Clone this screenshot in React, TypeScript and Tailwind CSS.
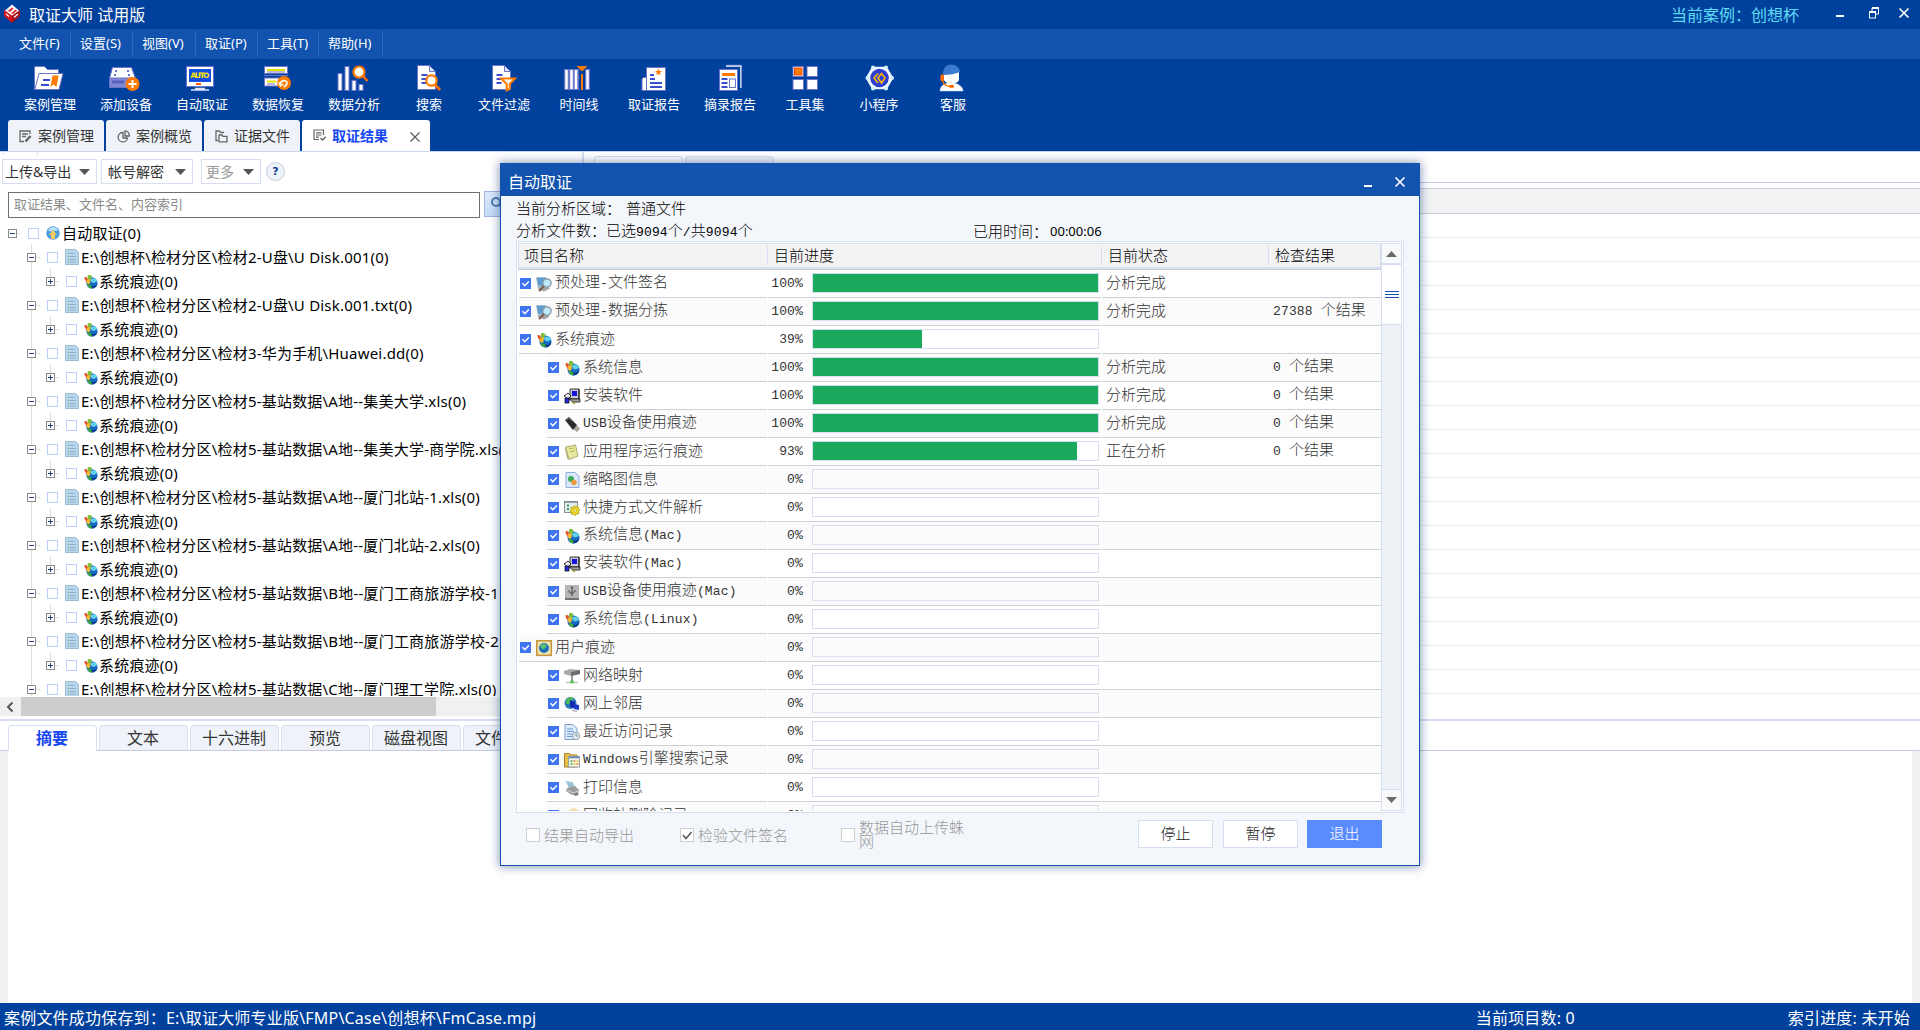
import React from "react";

const P = "#6a74c8";

function Svg({ w, h, vb, className, children }: { w: number; h: number; vb?: string; className?: string; children: React.ReactNode }) {
  return (
    <svg width={w} height={h} viewBox={vb ?? `0 0 ${w} ${h}`} className={"block shrink-0 overflow-visible " + (className ?? "")} fill="none">
      {children}
    </svg>
  );
}

/* ---------- toolbar icons ---------- */

const DocPage = ({ x }: { x: number }) => (
  <>
    <path d={`M${x} 1.5h12l6 6v18h-18z`} fill="#fff" stroke={P} />
    <path d={`M${x + 12} 1.5v6h6z`} fill="#dfe3ff" stroke={P} />
    <path d={`M${x + 4} 11h6M${x + 4} 15h5M${x + 4} 19h5`} stroke="#3a4fd0" strokeWidth="2" />
  </>
);

const toolIcons: Record<string, React.ReactNode> = {
  cases: (
    <>
      <path d="M.5 25.5V2.5h10l3 3h11v5" fill="#fff" stroke={P} />
      <path d="M5 9.5h24l-4 16H.8z" fill="#fff" stroke={P} />
      <path d="M9 16h7M7 21h8" stroke="#3a4fd0" strokeWidth="2" />
      <path d="M18.5 11.5h6l-2 11.5-3-2.5-3 2.5z" fill="#ff7a00" />
    </>
  ),
  device: (
    <>
      <path d="M2.5 3.500h19l4 11h-26z" fill="#fff" stroke={P} />
      <rect x="-.5" y="14" width="26" height="9.500" fill="#8188d4" stroke={P} />
      <path d="M2 18h12" stroke="#5660bf" strokeWidth="3" />
      <path d="M5 7h2M17 7h2M4 11h2M18 11h2" stroke={P} strokeWidth="2" />
      <circle cx="22.500" cy="20" r="7" fill="#ff7a00" />
      <path d="M22.500 16v8M18.500 20h8" stroke="#fff" strokeWidth="2" />
    </>
  ),
  auto: (
    <>
      <rect x=".5" y="2.500" width="27" height="20" fill="#fff" stroke={P} />
      <rect x="3" y="5" width="22" height="13" fill="#1450e0" />
      <text x="14" y="14" textAnchor="middle" fontSize="7.500" textLength="19" fontFamily="DejaVu Sans" fontWeight="700" fill="#ffe600">AUTO</text>
      <path d="M10 20h5" stroke="#ff5a00" strokeWidth="2" />
      <path d="M9 24.500h10M5 26h18" stroke="#dfe3ff" strokeWidth="1.500" />
    </>
  ),
  recover: (
    <>
      <rect x="2.500" y="2.500" width="23" height="7" fill="#fff" stroke={P} />
      <path d="M5 6h18" stroke="#e8e000" strokeWidth="2" />
      <path d="M5 8h18" stroke={P} />
      <rect x="2.500" y="14" width="18" height="8" fill="#fff" stroke={P} />
      <path d="M5 17.500h9" stroke="#e8e000" strokeWidth="2" />
      <path d="M2 11.500h24M5 20h8" stroke={P} />
      <circle cx="22" cy="19" r="7" fill="#ff7a00" />
      <path d="M18.500 21.500c-1-5 6-6.500 6.500-2.500 0 2.500-2 3-3 4" stroke="#fff" strokeWidth="1.800" />
      <path d="M16.500 18l2 4 3-2" stroke="#fff" strokeWidth="1.200" />
    </>
  ),
  analysis: (
    <>
      <g fill="#fff" stroke={P}>
        <rect x="0" y="9.500" width="4" height="17" />
        <rect x="7" y="2.500" width="4" height="24" />
        <rect x="14" y="16.500" width="4" height="10" />
        <rect x="21" y="20.500" width="4" height="6" />
      </g>
      <path d="M25 12l4.500 5" stroke="#ff6a00" strokeWidth="2.600" />
      <circle cx="21" cy="8" r="5.500" fill="#fff" stroke="#ff7a00" strokeWidth="2.200" />
    </>
  ),
  search: (
    <>
      <DocPage x={4.5} />
      <path d="M22 20.500l5 5.500" stroke="#ff6a00" strokeWidth="2.800" />
      <circle cx="18.500" cy="16.500" r="5.200" fill="#fff" stroke="#ff7a00" strokeWidth="2.200" />
    </>
  ),
  filter: (
    <>
      <DocPage x={4.5} />
      <path d="M13 14.500h14l-5.300 5.500v5l-3 1.500v-6.500z" fill="#fff" stroke="#ff7a00" strokeWidth="2" />
    </>
  ),
  timeline: (
    <>
      <rect x="1" y="5" width="26" height="21" fill={P} />
      <path d="M3.500 6v19M8.500 6v19M13 6v19M24.500 6v19" stroke="#fff" strokeWidth="2.500" />
      <rect x="16" y="4" width="6" height="22" fill="#00419e" />
      <path d="M13.500 2h11l-5.500 5.500z" fill="#ff7a00" />
      <path d="M19 10v16" stroke="#ff7a00" strokeWidth="2" />
    </>
  ),
  report: (
    <>
      <path d="M8.500 13.500h-3l-1.500 1.500v11.500h5z" fill="#fff" stroke={P} />
      <rect x="8.500" y="3.500" width="19" height="23" fill="#fff" stroke={P} />
      <path d="M12 11h4M12 15h5M12 19h12M12 23h12" stroke="#3a4fd0" strokeWidth="1.800" />
      <path d="M20.500 4.500l1 2.500h2.500l-2 1.700.8 2.500-2.300-1.500-2.300 1.500.8-2.500-2-1.700h2.500z" fill="#ff7a00" />
    </>
  ),
  excerpt: (
    <>
      <path d="M12 2h15v22" stroke="#fff" strokeWidth="1.500" />
      <path d="M12 1h15.500v23" stroke={P} strokeWidth=".6" />
      <rect x="5.500" y="5.500" width="18" height="21" fill="#fff" stroke={P} />
      <path d="M8 10.500h13" stroke="#ff7a00" strokeWidth="3" />
      <path d="M7.500 15h6M7.500 19h6M7.500 23h6" stroke="#3a4fd0" strokeWidth="1.800" />
      <rect x="15.500" y="15" width="6" height="8.500" fill="#fff" stroke={P} />
    </>
  ),
  tools: (
    <>
      <g fill="#fff" stroke={P}>
        <rect x="4" y="2.500" width="10.500" height="10" />
        <rect x="18" y="2.500" width="10.500" height="10" />
        <rect x="4" y="15.500" width="10.500" height="10" />
        <rect x="18" y="15.500" width="10.500" height="10" />
      </g>
      <rect x="5.500" y="4" width="7.500" height="7" fill="#ff7a00" stroke="#ff4a00" />
    </>
  ),
  mini: (
    <>
      <path d="M9.500 3.500h14l6 10.500-6 10.500h-14l-6-10.500z" fill="#fff" stroke="#e6f4ff" strokeWidth="1.500" />
      <g fill="#d4f0ff">
        <circle cx="10" cy="3.500" r="2" /><circle cx="23" cy="3.500" r="2" /><circle cx="29" cy="14" r="2" />
        <circle cx="23" cy="24.500" r="2" /><circle cx="10" cy="24.500" r="2" /><circle cx="4.500" cy="14" r="2" />
      </g>
      <circle cx="16.500" cy="14" r="9.300" fill="#2c3fcf" />
      <path d="M15 9.500l-4 4.500 4 5M18.500 9.500l-3.500 4.500 3.500 5 3.500-5z" stroke="#ffb400" strokeWidth="1.600" />
    </>
  ),
  service: (
    <>
      <path d="M3 27c0-5 4-7 8-8h6c5 1 9 4 9 8z" fill="#fff" stroke="#c9d4f5" strokeWidth=".5" />
      <path d="M7 8h15v8c-2 5-13 5-15 0z" fill="#fff" />
      <path d="M6 11c-1-14 16-13 17-3-5 2-10 3-17 3z" fill="#3a7bd0" />
      <rect x="3.500" y="10.500" width="3.500" height="6.500" rx="1" fill="#ff6a00" />
      <path d="M5.500 17c1 4 4 5.500 9 5.500" stroke="#ff7a00" strokeWidth="1.200" />
      <rect x="12" y="21" width="5" height="2.800" rx="1" fill="#ff6a00" />
    </>
  ),
};

const tools: [string, string, string][] = [
  ["cases", "案例管理", "w-[76px]"],
  ["device", "添加设备", "w-[76px]"],
  ["auto", "自动取证", "w-[76px]"],
  ["recover", "数据恢复", "w-[76px]"],
  ["analysis", "数据分析", "w-[76px]"],
  ["search", "搜索", "w-[74px]"],
  ["filter", "文件过滤", "w-[76px]"],
  ["timeline", "时间线", "w-[74px]"],
  ["report", "取证报告", "w-[76px]"],
  ["excerpt", "摘录报告", "w-[76px]"],
  ["tools", "工具集", "w-[74px]"],
  ["mini", "小程序", "w-[74px]"],
  ["service", "客服", "w-[74px]"],
];

/* ---------- small icons ---------- */

const Globe = () => (
  <>
    <circle cx="9.500" cy="9.500" r="6" fill="#1668c4" />
    <path d="M8 6c3-3 7-1 7.300 2-2 0-3 2-4.500 1.500S8 8 8 6z" fill="#5fd0e8" />
    <path d="M5 11c2 0 3 1 5 1.500s1 2-1 3C6 15 4.500 13 5 11z" fill="#3aa83a" />
    <path d="M9 12c2 2 5 0 6.300-2 0 3-3 5.500-6 5.300z" fill="#0c3c8c" />
    <path d="M1.500 3.500c2-1 3 0 3.500 1.500l-.5 4C3 8 1.500 6 1.500 3.500z" fill="#e8542c" />
    <path d="M5 1.500c2-.8 4-.5 4.500 1.500L7.500 7 5 5z" fill="#7cc03c" />
    <path d="M4 6l4-1-.5 5-2.500 1C4 10 3.500 8 4 6z" fill="#f0b82c" />
  </>
);

const rowIcons: Record<string, React.ReactNode> = {
  globe: <Globe />,
  magnify: (
    <>
      <path d="M0 1.500l9-.5 5 3-1 8-4 3-7-2z" fill="#a4b8c4" />
      <path d="M1 1.500l8 .5-.5 9L2 9z" fill="#5c9ed0" />
      <path d="M2 13l6 2.500 6-3-4-1.500z" fill="#a4a4a4" />
      <circle cx="11" cy="7" r="4.200" fill="#bfe8fa" stroke="#8a9aa8" strokeWidth="1.200" />
      <path d="M8 10l-5 5" stroke="#7a5a48" strokeWidth="2" />
    </>
  ),
  install: (
    <>
      <path d="M6 1h9v10H6z" fill="#c9c9c9" stroke="#111" strokeWidth=".8" />
      <path d="M8 3h5v5H8z" fill="#1414e0" />
      <path d="M5 11h11v3H9z" fill="#a0a0a0" stroke="#111" strokeWidth=".8" />
      <path d="M15 1v10" stroke="#111" />
      <path d="M0 8l4-3 3 3-3 3z" fill="#e8e8e8" stroke="#111" strokeWidth=".8" />
      <path d="M1 10h4v5H1z" fill="#2828d8" stroke="#111" strokeWidth=".8" />
      <path d="M8 14l3 2" stroke="#a89428" strokeWidth="1.500" />
    </>
  ),
  usb: (
    <>
      <path d="M1 4l4-3 8 8-4 5z" fill="#2b2b2b" />
      <path d="M2 4l3-2 3 3" stroke="#666" />
      <path d="M10 13l3-3 2.500 2.500-2.500 3z" fill="#b4a898" stroke="#777" strokeWidth=".6" />
    </>
  ),
  app: (
    <>
      <path d="M1.500 3l10-2 2.500 11-9 3.500z" fill="#e6e8a0" stroke="#9c9a5c" strokeWidth=".8" />
      <path d="M1.500 3l3.500 12-1.500.3L.8 4z" fill="#a8a878" />
      <path d="M5 5l5-1M6 8l5-1.500" stroke="#a6bc58" />
    </>
  ),
  thumb: (
    <>
      <path d="M2 .5h9l4 3.500v11.500H2z" fill="#dbe8fa" stroke="#8cacdc" />
      <circle cx="7" cy="7" r="3" fill="#3ca858" />
      <circle cx="10" cy="10.500" r="2.800" fill="#e89c3c" />
    </>
  ),
  shortcut: (
    <>
      <rect x=".5" y="1.500" width="13" height="11" fill="#e4ecec" stroke="#8c9494" />
      <path d="M.5 2h13" stroke="#7c8c98" strokeWidth="1.500" />
      <path d="M3 5.500h2M3 9h2" stroke="#2c9c5c" strokeWidth="2" />
      <path d="M10.500 5.500l1.500 1.500 2-.5.300 2L16 10l-1.500 1.500.5 2-2.200.3-1.300 1.700-1.800-1.200-2 .4-.2-2L6 11l1.300-1.500-.3-2 2.200-.2z" fill="#ecd41c" stroke="#a89410" strokeWidth=".7" />
      <circle cx="11" cy="10.500" r="1.600" fill="#fbf4b0" stroke="#a89410" strokeWidth=".5" />
    </>
  ),
  usbmac: (
    <>
      <rect x="1" y="1" width="14" height="13" fill="#b4b4b4" />
      <path d="M1 15h14" stroke="#444" strokeWidth="1.500" />
      <path d="M8 12V3.500M8 10L5 8V6.500M8 9l3-1.500V6" stroke="#444" />
      <circle cx="8" cy="3.500" r="1" fill="#444" />
    </>
  ),
  user: (
    <>
      <rect x=".8" y=".8" width="14.500" height="14.500" fill="#f2e4b0" stroke="#c09840" strokeWidth="1.600" />
      <circle cx="8" cy="8" r="5" fill="#1c70b8" />
      <path d="M4 6c2-3 6-3 7 0-2 2-3 4-5 3z" fill="#58c070" />
    </>
  ),
  netmap: (
    <>
      <path d="M0 3l6-2 10 1v4L7 8 0 6z" fill="#a8a8a8" />
      <path d="M7 4l9-2v4L7 8z" fill="#6c6c6c" />
      <path d="M8 8v5" stroke="#999" strokeWidth="2" />
      <path d="M2 14.500h12" stroke="#c8c8c8" strokeWidth="1.500" />
      <path d="M6 14h4" stroke="#5cc85c" strokeWidth="2.500" />
    </>
  ),
  neighbor: (
    <>
      <circle cx="6.500" cy="7" r="6" fill="#2878b8" />
      <path d="M1.500 5c2-4 7-5 8-2-2 2-4 6-7 5z" fill="#4cb858" />
      <path d="M6 4l5 2v6l-5-1z" fill="#1428b0" />
      <path d="M10 8l5 1v5l-5-1z" fill="#2038c8" />
      <path d="M8 14l5 1.500" stroke="#b4b4c8" strokeWidth="1.500" />
    </>
  ),
  recent: (
    <>
      <path d="M1 .5h8l4 4v11H1z" fill="#dceafa" stroke="#7c9ccc" />
      <path d="M3 5h6M3 7.500h7M3 10h5M3 12.500h5" stroke="#6c9cdc" />
      <circle cx="12" cy="12" r="3.700" fill="#e0e8ee" stroke="#98a4b0" />
      <path d="M12 9.500V12h2" stroke="#688" strokeWidth=".8" />
    </>
  ),
  win: (
    <>
      <path d="M.5 1.500h5l1.500 1.500h6v12H.5z" fill="#e4bc48" stroke="#a88428" />
      <rect x="4.500" y="4.500" width="11" height="10.500" fill="#f4f4e8" stroke="#98a0a8" />
      <path d="M5 5.500h10" stroke="#5c88c0" strokeWidth="1.500" />
      <path d="M6.500 9h2M6.500 12h2" stroke="#3cac4c" strokeWidth="1.500" />
      <path d="M9.500 9h2M12.500 12h2" stroke="#e88c2c" strokeWidth="1.500" />
      <path d="M12.500 9h2M9.500 12h2" stroke="#e8c83c" strokeWidth="1.500" />
    </>
  ),
  print: (
    <>
      <path d="M1.500 1l7 1 3 6-6 1z" fill="#9cc4d4" />
      <path d="M3 8l8-2 4 4-1 4-6 1-6-4z" fill="#9c9c9c" />
      <path d="M3 10l6 3 5-2" stroke="#d8d8d8" />
      <path d="M9 14l5-1 .5 2-3 1z" fill="#787878" />
    </>
  ),
  recycle: <path d="M2 6c3-6 9-7 12-4v12H2z" fill="#f4e0b0" />,
};

/* ---------- text in the dialog: CJK at 15px, Latin in narrower monospace cells ---------- */

function Song({ children }: { children: string }) {
  const parts = children.split(/([\x20-\x7e]+)/);
  return (
    <>
      {parts.map((p, i) =>
        i % 2 ? (
          <span key={i} className="whitespace-pre font-['Liberation_Mono'] text-[13px] tracking-[0.15px]">{p}</span>
        ) : (
          p
        )
      )}
    </>
  );
}

const CheckBlue = () => (
  <div className="flex size-[11px] shrink-0 items-center justify-center bg-[#3f74f0]">
    <Svg w={9} h={9}><path d="M1.500 4.200l2.300 2.500L7.800 2.500" stroke="#fff" strokeWidth="1.500" /></Svg>
  </div>
);

type Row = { icon: string; name: string; lvl: 0 | 1; pct: number; status?: string; result?: string };
const rows: Row[] = [
  { icon: "magnify", name: "预处理-文件签名", lvl: 0, pct: 100, status: "分析完成" },
  { icon: "magnify", name: "预处理-数据分拣", lvl: 0, pct: 100, status: "分析完成", result: "27388 个结果" },
  { icon: "globe", name: "系统痕迹", lvl: 0, pct: 39 },
  { icon: "globe", name: "系统信息", lvl: 1, pct: 100, status: "分析完成", result: "0 个结果" },
  { icon: "install", name: "安装软件", lvl: 1, pct: 100, status: "分析完成", result: "0 个结果" },
  { icon: "usb", name: "USB设备使用痕迹", lvl: 1, pct: 100, status: "分析完成", result: "0 个结果" },
  { icon: "app", name: "应用程序运行痕迹", lvl: 1, pct: 93, status: "正在分析", result: "0 个结果" },
  { icon: "thumb", name: "缩略图信息", lvl: 1, pct: 0 },
  { icon: "shortcut", name: "快捷方式文件解析", lvl: 1, pct: 0 },
  { icon: "globe", name: "系统信息(Mac)", lvl: 1, pct: 0 },
  { icon: "install", name: "安装软件(Mac)", lvl: 1, pct: 0 },
  { icon: "usbmac", name: "USB设备使用痕迹(Mac)", lvl: 1, pct: 0 },
  { icon: "globe", name: "系统信息(Linux)", lvl: 1, pct: 0 },
  { icon: "user", name: "用户痕迹", lvl: 0, pct: 0 },
  { icon: "netmap", name: "网络映射", lvl: 1, pct: 0 },
  { icon: "neighbor", name: "网上邻居", lvl: 1, pct: 0 },
  { icon: "recent", name: "最近访问记录", lvl: 1, pct: 0 },
  { icon: "win", name: "Windows引擎搜索记录", lvl: 1, pct: 0 },
  { icon: "print", name: "打印信息", lvl: 1, pct: 0 },
  { icon: "recycle", name: "回收站删除记录", lvl: 1, pct: 0 },
];

function ListRow({ row, odd }: { row: Row; odd: boolean }) {
  const cell = "h-[28px] border-b border-[#cfcfd6] " + (odd ? "bg-[#fbfbfb]" : "bg-white");
  return (
    <div className="flex h-[28px] shrink-0 text-[#333]">
      <div className={"flex w-[249px] shrink-0 " + (row.lvl ? "pl-[29px]" : "pl-px")}>
        <div className={"flex grow items-center whitespace-nowrap pl-px " + cell}>
          <CheckBlue />
          <Svg w={16} h={16} className="ml-[5px]">{rowIcons[row.icon]}</Svg>
          <span className="ml-[3px] pb-[3px]"><Song>{row.name}</Song></span>
        </div>
      </div>
      <div className={"ml-px flex w-[333px] shrink-0 items-center " + cell}>
        <span className="w-[35px] pb-[3px] text-right"><Song>{row.pct + "%"}</Song></span>
        <div className="mb-px ml-[9px] h-[20px] w-[287px] border border-[#d5dff0]">
          <div className="h-full bg-[#1ba95e]" style={{ width: row.pct === 100 ? "285px" : `${Math.floor(row.pct * 2.84 * (row.pct < 50 ? 0.986 : 1))}px` }} />
        </div>
      </div>
      <div className={"ml-px flex grow items-center whitespace-nowrap " + cell}>
        <span className="w-[166px] pb-[3px] pl-[4px]">{row.status}</span>
        <span className="pb-[3px] pl-[5px]">{row.result && <Song>{row.result}</Song>}</span>
      </div>
    </div>
  );
}

const Box = ({ checked }: { checked?: boolean }) => (
  <div className="mt-px flex size-[14px] shrink-0 items-center justify-center border border-[#cfcfcf] bg-white">
    {checked && <Svg w={10} h={10}><path d="M1 5l3 3.500L9.500 2" stroke="#555" strokeWidth="1.500" /></Svg>}
  </div>
);

const CloseX = ({ s = 10, c = "#fff", sw = 1.6 }: { s?: number; c?: string; sw?: number }) => (
  <Svg w={s} h={s} vb="0 0 10 10"><path d="M.5 .5l9 9M9.500 .5l-9 9" stroke={c} strokeWidth={sw} /></Svg>
);

function Dialog() {
  return (
    <div className="absolute left-[500px] top-[163px] flex h-[703px] w-[920px] flex-col border border-[#1153ae] bg-[#f3f6fb] font-['Noto_Sans_CJK_SC',sans-serif] text-[15px] font-light text-black shadow-[0_0_9px_1px_rgba(30,60,120,0.5)]">
      <div className="flex h-[32px] shrink-0 items-center justify-between bg-[#1153ae] pl-[7px] pr-[14px] pt-[4px] text-[16px] font-normal text-white">
        <span className="pb-[2px]">自动取证</span>
        <div className="flex items-center gap-[23px] pb-px">
          <div className="mt-[8px] h-[2px] w-[8px] bg-white" />
          <CloseX />
        </div>
      </div>
      <div className="flex h-[23px] items-center pl-[15px] leading-none"><span>当前分析区域：</span><span className="ml-[5px]">普通文件</span></div>
      <div className="flex h-[22px] items-center pl-[15px] leading-none">
        <span className="w-[457px]"><Song>分析文件数：已选9094个/共9094个</Song></span>
        <span>已用时间：</span>
        <span className="ml-[2px] pt-[2px] font-['Noto_Sans'] text-[13px] font-normal">00:00:06</span>
      </div>
      <div className="ml-[15px] flex h-[572px] w-[888px] border border-[#d5dff0] bg-white p-px">
        <div className="flex h-[568px] w-[863px] shrink-0 flex-col overflow-hidden">
          <div className="flex h-[26px] shrink-0 items-center border border-b-2 border-[#d5dff0] bg-[#f3f3f3] leading-none">
            <span className="w-[249px] border-r border-[#d5dff0] pb-[3px] pl-[5px] pt-px">项目名称</span>
            <span className="w-[334px] border-r border-[#d5dff0] pb-[3px] pl-[6px] pt-px">目前进度</span>
            <span className="w-[167px] border-r border-[#d5dff0] pb-[3px] pl-[6px] pt-px">目前状态</span>
            <span className="pb-[3px] pl-[6px] pt-px">检查结果</span>
          </div>
          <div className="h-px shrink-0 bg-[#cfcfd6]" />
          {rows.map((r, i) => <ListRow key={i} row={r} odd={i % 2 === 1} />)}
        </div>
        <div className="flex w-[21px] flex-col border border-[#d5dff0] bg-[#eef1f6]">
          <div className="flex h-[21px] items-center justify-center border-b-2 border-[#d5dff0] bg-[#f8f9fb]">
            <Svg w={11} h={6}><path d="M0 6L5.500 0 11 6z" fill="#6b6b6b" /></Svg>
          </div>
          <div className="flex h-[60px] flex-col items-center justify-center gap-[2px] border-b border-[#d5dff0] bg-white">
            <div className="h-px w-[14px] bg-[#1153ae]" /><div className="h-px w-[14px] bg-[#1153ae]" /><div className="h-px w-[14px] bg-[#1153ae]" />
          </div>
          <div className="grow" />
          <div className="flex h-[21px] items-center justify-center border-t border-[#d5dff0] bg-[#f8f9fb]">
            <Svg w={11} h={6}><path d="M0 0l5.500 6L11 0z" fill="#6b6b6b" /></Svg>
          </div>
        </div>
      </div>
      <div className="flex grow pl-[25px] pt-[7px] text-[#999]">
        <div className="flex h-[28px] w-[154px] items-center gap-[4px] leading-none"><Box /><span>结果自动导出</span></div>
        <div className="flex h-[28px] w-[161px] items-center gap-[4px] leading-none"><Box checked /><span>检验文件签名</span></div>
        <div className="flex h-[28px] w-[297px] items-center gap-[4px]">
          <Box /><span className="w-[108px] leading-[14px]">数据自动上传蛛网</span>
        </div>
        <div className="flex h-[28px] items-center leading-none text-[#222]">
          <div className="flex h-[28px] w-[75px] items-center justify-center border border-[#d5dff0] bg-white pb-[3px]">停止</div>
          <div className="ml-[10px] flex h-[28px] w-[75px] items-center justify-center border border-[#d5dff0] bg-white pb-[3px]">暂停</div>
          <div className="ml-[9px] flex h-[28px] w-[75px] items-center justify-center bg-[#5b8cff] pb-[3px] text-white">退出</div>
        </div>
      </div>
    </div>
  );
}

/* ---------- tree ---------- */

const Expander = ({ open }: { open: boolean }) => (
  <Svg w={13} h={9}>
    <rect x=".5" y=".5" width="8" height="8" fill="#fff" stroke="#8c8c8c" />
    <path d={open ? "M2 4.500h5" : "M2 4.500h5M4.500 2v5"} stroke="#23427c" />
    <path d="M9 4.500h4" stroke="#dcdcdc" />
  </Svg>
);
const TreeCheck = () => <div className="size-[11px] shrink-0 border border-[#bcd0fa] bg-white" />;

const files = [
  "检材2-U盘\\U Disk.001(0)",
  "检材2-U盘\\U Disk.001.txt(0)",
  "检材3-华为手机\\Huawei.dd(0)",
  "检材5-基站数据\\A地--集美大学.xls(0)",
  "检材5-基站数据\\A地--集美大学-商学院.xls(0)",
  "检材5-基站数据\\A地--厦门北站-1.xls(0)",
  "检材5-基站数据\\A地--厦门北站-2.xls(0)",
  "检材5-基站数据\\B地--厦门工商旅游学校-1.xls(0)",
  "检材5-基站数据\\B地--厦门工商旅游学校-2.xls(0)",
  "检材5-基站数据\\C地--厦门理工学院.xls(0)",
];

function Tree() {
  return (
    <div className="relative h-[475px] overflow-hidden whitespace-nowrap text-[15px] leading-[24px] tracking-[0.2px] text-black">
      <div className="absolute left-[31px] top-[23px] h-[460px] w-px bg-[#dcdcdc]" />
      <div className="relative flex h-[24px] items-center pl-[8px]">
        <Expander open />
        <div className="ml-[7px]"><TreeCheck /></div>
        <Svg w={14} h={14} className="ml-[7px]">
          <circle cx="7" cy="7" r="6.700" fill="#4a9be0" />
          <path d="M2 4c2-4 8-4 10 0-2 2-3 0-5 1s-3 1-5-1z" fill="#b8e0fa" />
          <path d="M5 13V9H3l4-5 4 5H9v4z" fill="#f6c860" />
        </Svg>
        <span className="ml-[2px] pb-px">自动取证(0)</span>
      </div>
      {files.map((f) => (
        <div key={f} className="relative">
          <div className="flex h-[24px] items-center pl-[27px]">
            <Expander open />
            <div className="ml-[7px]"><TreeCheck /></div>
            <Svg w={14} h={16} className="ml-[7px]">
              <path d="M.5 .5h10l3 3v12H.5z" fill="#b9d6ea" stroke="#98bcd4" />
              <path d="M3 4.500h1M3 7.500h1M3 10.500h1M3 13h1" stroke="#4c9c6c" />
              <path d="M5 4.500h5M5 7.500h6M5 10.500h6M5 13h6" stroke="#8cb0cc" />
            </Svg>
            <span className="ml-[2px]">E:\创想杯\检材分区\{f}</span>
          </div>
          <div className="relative flex h-[24px] items-center pl-[46px]">
            <div className="absolute left-[50px] top-0 h-[8px] w-px bg-[#dcdcdc]" />
            <Expander open={false} />
            <div className="ml-[7px]"><TreeCheck /></div>
            <Svg w={15} h={15} vb="0 0 16 16" className="ml-[6px]"><Globe /></Svg>
            <span className="ml-px">系统痕迹(0)</span>
          </div>
        </div>
      ))}
    </div>
  );
}

const Caret = () => <Svg w={11} h={6}><path d="M0 0h11L5.500 6z" fill="#555" /></Svg>;

function LeftPanel() {
  return (
    <div className="flex w-[582px] shrink-0 flex-col">
      <div className="flex h-[7px] gap-[33px] pl-[3px]">
        <div className="h-[3px] w-px bg-[#d5dff0]" /><div className="h-[3px] w-px bg-[#d5dff0]" />
      </div>
      <div className="flex h-[25px] items-center pl-[2px] text-[14px] leading-none text-[#333]">
        <div className="flex h-[25px] w-[95px] items-center justify-between border border-[#d5dff0] pl-[2px] pr-[6px]"><span>上传&amp;导出</span><Caret /></div>
        <div className="ml-[4px] flex h-[25px] w-[92px] items-center justify-between border border-[#d5dff0] pl-[6px] pr-[6px]"><span>帐号解密</span><Caret /></div>
        <div className="ml-[8px] flex h-[25px] w-[60px] items-center justify-between border border-[#d5dff0] pl-[4px] pr-[6px] text-[#9a9a9a]"><span>更多</span><Caret /></div>
        <div className="ml-[5px] flex size-[19px] items-center justify-center rounded-full border border-[#c4cfe0] bg-[#eef2f9] font-['DejaVu_Sans'] text-[11px] font-bold text-[#0a3f8f]">?</div>
      </div>
      <div className="mt-[7px] flex h-[28px] items-start pl-[8px]">
        <div className="mt-px flex h-[26px] w-[472px] items-center border border-[#6f6f6f] pb-px pl-[5px] text-[13px] leading-none text-[#8a8a8a]">取证结果、文件名、内容索引</div>
        <div className="ml-[4px] flex h-[26px] w-[40px] items-center border border-[#9db8dc] bg-gradient-to-b from-[#dce9fb] to-[#c3daf8] pl-[6px]">
          <Svg w={14} h={14}><circle cx="5" cy="5" r="4" stroke="#4a7ab0" strokeWidth="2" /><path d="M8 8l5 5" stroke="#4a7ab0" strokeWidth="2" /></Svg>
        </div>
      </div>
      <div className="h-[2px]" />
      <Tree />
      <div className="mt-px flex h-[19px] items-center bg-[#f0f0f0]">
        <div className="flex w-[21px] justify-center pr-[2px]"><Svg w={6} h={10}><path d="M5.500 .5L1 5l4.500 4.500" stroke="#555" strokeWidth="2" /></Svg></div>
        <div className="h-[19px] w-[415px] bg-[#cdcdcd]" />
      </div>
    </div>
  );
}

function RightPanel() {
  return (
    <div className="flex grow flex-col border-l-2 border-[#d5dff0]">
      <div className="flex h-[31px] items-end gap-[2px] border-b border-[#c9cbdc] pl-[10px]">
        <div className="h-[26px] w-[89px] rounded-t border border-b-0 border-[#d5dff0] bg-white" />
        <div className="h-[26px] w-[89px] rounded-t border border-b-0 border-[#d5dff0] bg-[#eff3f9]" />
      </div>
      <div className="mt-[5px] h-[26px] border-y border-[#c9cbdc] bg-[#f3f3f3]" />
      {Array.from({ length: 20 }, (_, i) => <div key={i} className="h-[24px] border-b border-[#ececec]" />)}
    </div>
  );
}

const tabIcons = [
  <Svg w={13} h={13}><path d="M11 4V1H1v10.500h4M3 4h6M3 6.500h4" stroke="#666" strokeWidth="1.300" /><path d="M6.500 11.500l5-5.500" stroke="#666" strokeWidth="2.500" /></Svg>,
  <Svg w={13} h={13}><path d="M6 2.500A4.700 4.700 0 1 0 10.500 8H6z" stroke="#666" strokeWidth="1.300" /><path d="M8 .8V6h4.300A4.500 4.500 0 0 0 8 .8z" stroke="#666" strokeWidth="1.300" /></Svg>,
  <Svg w={13} h={13}><path d="M3 10.500H1V1h3.500l1 1.500H9" stroke="#666" strokeWidth="1.300" /><path d="M4 5h3l1 1.300h4v5.500H4z" stroke="#666" strokeWidth="1.300" /></Svg>,
  <Svg w={13} h={13}><path d="M10.500 6V1H1v9.500h5M3 3.800h5.500M3 6h5.500M3 8.200h3" stroke="#666" strokeWidth="1.200" /><path d="M7.500 9l2 2 3.300-3.300" stroke="#666" strokeWidth="1.400" /></Svg>,
];

export default function App() {
  return (
    <div className="relative flex h-[1030px] w-[1920px] flex-col overflow-hidden bg-white font-['Noto_Sans','Noto_Sans_CJK_SC',sans-serif]">
      <header className="flex h-[152px] shrink-0 flex-col border-b border-[#ccd6ea] bg-[#00419e] text-white">
        <div className="flex h-[29px] shrink-0 items-center pl-[3px]">
          <Svg w={18} h={20} className="-mt-[2px]">
            <path d="M9 .5l8 7-8 6-8-6z" fill="#fff" />
            <path d="M1 6l8 5.500v7.500l-8-7z" fill="#d4141c" />
            <path d="M17 6L9 11.500V19l8-7z" fill="#a80c14" />
            <path d="M5 7l4-3.500 1.500 1L7 8zM8 9.500l4.500-4 1.500 1L10 10z" fill="#e0202a" />
            <path d="M3 10l3 2.500M11 13.500l4-3.500" stroke="#fff" strokeWidth="1.200" />
          </Svg>
          <span className="ml-[8px] text-[16px] leading-none">取证大师 试用版</span>
          <span className="ml-auto text-[16px] leading-none text-[#5fdcf5]">当前案例：创想杯</span>
          <div className="ml-[37px] mr-[11px] flex items-center pb-[4px]">
            <div className="mt-[7px] h-[2px] w-[8px] bg-white" />
            <Svg w={10} h={12} className="ml-[25px]">
              <path d="M3 4V1h6.500v6H7" stroke="#fff" /><path d="M3 1h7" stroke="#fff" strokeWidth="2" />
              <rect x=".5" y="5" width="6" height="6" stroke="#fff" /><path d="M0 5h7" stroke="#fff" strokeWidth="2" />
            </Svg>
            <div className="ml-[20px]"><CloseX /></div>
          </div>
        </div>
        <div className="flex h-[30px] shrink-0 items-center bg-[#1153ae] pl-[9px] text-[13px] leading-[24px]">
          <span className="h-[26px] w-[62px] border-r border-[#2f69bb] pl-[10px]">文件(F)</span>
          <span className="h-[26px] w-[62px] border-r border-[#2f69bb] pl-[9px]">设置(S)</span>
          <span className="h-[26px] w-[63px] border-r border-[#2f69bb] pl-[9px]">视图(V)</span>
          <span className="h-[26px] w-[62px] border-r border-[#2f69bb] pl-[9px]">取证(P)</span>
          <span className="h-[26px] w-[61px] border-r border-[#2f69bb] pl-[9px]">工具(T)</span>
          <span className="h-[26px] w-[64px] border-r border-[#2f69bb] pl-[9px]">帮助(H)</span>
        </div>
        <div className="flex h-[61px] shrink-0 pl-[12px] pt-[5px]">
          {tools.map(([ic, label, w]) => (
            <div key={ic} className={"flex flex-col items-center " + w}>
              <Svg w={32} h={28}>{toolIcons[ic]}</Svg>
              <span className="mt-[2px] text-[13px] leading-[20px]">{label}</span>
            </div>
          ))}
        </div>
        <nav className="flex h-[31px] shrink-0 gap-[2px] pl-[8px] text-[14px] leading-none text-[#333]">
          {["案例管理", "案例概览", "证据文件"].map((t, i) => (
            <div key={t} className="flex w-[96px] items-center rounded-t-[3px] bg-[#eff3f9] pl-[11px] pt-px">
              {tabIcons[i]}<span className="ml-[6px]">{t}</span>
            </div>
          ))}
          <div className="flex w-[128px] items-center rounded-t-[3px] bg-white pl-[11px] pr-[10px]">
            {tabIcons[3]}<span className="ml-[6px] font-bold text-[#1747f0]">取证结果</span>
            <div className="ml-auto pt-[2px]"><CloseX c="#555" sw={1.1} /></div>
          </div>
        </nav>
      </header>

      <main className="flex h-[567px] shrink-0 overflow-hidden">
        <LeftPanel />
        <RightPanel />
      </main>

      <section className="flex h-[284px] shrink-0 flex-col border-t-2 border-[#d5dff0]">
        <div className="mt-[4px] flex h-[26px] shrink-0 gap-[2px] border-b border-[#c9cbdc] pl-[8px] text-[16px] leading-none text-[#333]">
          {["摘要", "文本", "十六进制", "预览", "磁盘视图", "文件分析"].map((t, i) => (
            <div
              key={t}
              className={"flex w-[89px] items-center justify-center rounded-t-[4px] border border-b-0 border-[#d5dff0] pr-px " + (i ? "h-[25px] bg-[#eff3f9]" : "h-[26px] bg-white pb-px font-bold text-[#1747f0]")}
            >
              {t}
            </div>
          ))}
        </div>
        <div className="grow border-x-8 border-[#f0f0f0]" />
      </section>

      <footer className="flex h-[27px] shrink-0 items-center bg-[#00419e] pl-[4px] pr-[10px] pt-[2px] text-[16px] leading-none tracking-[0.2px] text-white">
        <span>案例文件成功保存到：E:\取证大师专业版\FMP\Case\创想杯\FmCase.mpj</span>
        <span className="ml-auto w-[312px]">当前项目数: 0</span>
        <span>索引进度: 未开始</span>
      </footer>

      <Dialog />
    </div>
  );
}
